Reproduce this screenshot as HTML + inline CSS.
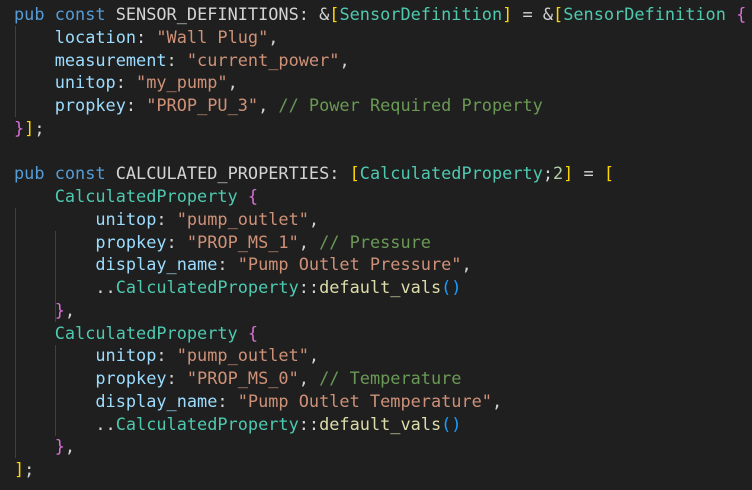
<!DOCTYPE html>
<html><head><style>
body{margin:0;background:#1f1f1f;width:752px;height:490px;overflow:hidden;position:relative}
pre{margin:0;position:absolute;left:14px;top:3px;font-family:"DejaVu Sans Mono","Liberation Mono",monospace;font-size:16.9px;line-height:22.75px;color:#d4d4d4;white-space:pre}
.k{color:#569cd6}.v{color:#9cdcfe}.s{color:#ce9178}.c{color:#6a9955}.t{color:#4ec9b0}.g{color:#ffd700}.p{color:#da70d6}.b{color:#179fff}.n{color:#b5cea8}.f{color:#dcdcaa}
.ig{position:absolute;width:1px;background:#404040}
</style></head><body>
<div class="ig" style="left:15px;top:26px;height:91px"></div>
<div class="ig" style="left:15px;top:208px;height:250px"></div>
<div class="ig" style="left:55px;top:231px;height:91px"></div>
<div class="ig" style="left:55px;top:345px;height:91px"></div>
<pre><span class="k">pub</span> <span class="k">const</span> SENSOR_DEFINITIONS: &amp;<span class="g">[</span><span class="t">SensorDefinition</span><span class="g">]</span> = &amp;<span class="g">[</span><span class="t">SensorDefinition</span> <span class="p">{</span>
    <span class="v">location</span>: <span class="s">"Wall Plug"</span>,
    <span class="v">measurement</span>: <span class="s">"current_power"</span>,
    <span class="v">unitop</span>: <span class="s">"my_pump"</span>,
    <span class="v">propkey</span>: <span class="s">"PROP_PU_3"</span>, <span class="c">// Power Required Property</span>
<span class="p">}</span><span class="g">]</span>;

<span class="k">pub</span> <span class="k">const</span> CALCULATED_PROPERTIES: <span class="g">[</span><span class="t">CalculatedProperty</span>;<span class="n">2</span><span class="g">]</span> = <span class="g">[</span>
    <span class="t">CalculatedProperty</span> <span class="p">{</span>
        <span class="v">unitop</span>: <span class="s">"pump_outlet"</span>,
        <span class="v">propkey</span>: <span class="s">"PROP_MS_1"</span>, <span class="c">// Pressure</span>
        <span class="v">display_name</span>: <span class="s">"Pump Outlet Pressure"</span>,
        ..<span class="t">CalculatedProperty</span>::<span class="f">default_vals</span><span class="b">()</span>
    <span class="p">}</span>,
    <span class="t">CalculatedProperty</span> <span class="p">{</span>
        <span class="v">unitop</span>: <span class="s">"pump_outlet"</span>,
        <span class="v">propkey</span>: <span class="s">"PROP_MS_0"</span>, <span class="c">// Temperature</span>
        <span class="v">display_name</span>: <span class="s">"Pump Outlet Temperature"</span>,
        ..<span class="t">CalculatedProperty</span>::<span class="f">default_vals</span><span class="b">()</span>
    <span class="p">}</span>,
<span class="g">]</span>;</pre>
</body></html>
